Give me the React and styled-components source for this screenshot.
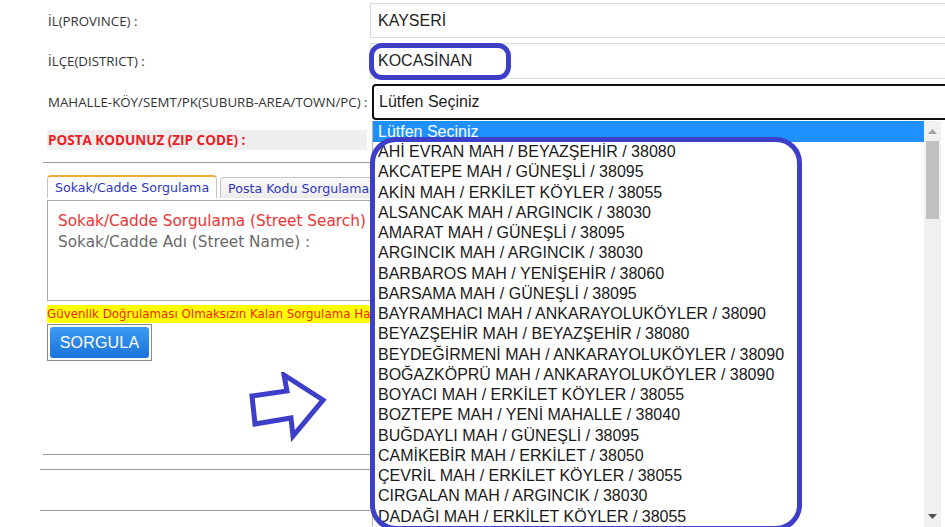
import React from "react";
import styled, { createGlobalStyle } from "styled-components";

const GlobalStyle = createGlobalStyle`
  html, body {
    margin: 0;
    padding: 0;
    background: #ffffff;
    overflow: hidden;
  }
  body {
    width: 945px;
    height: 527px;
    font-family: "Liberation Sans", Arial, sans-serif;
  }
`;

const Page = styled.div`
  position: relative;
  width: 945px;
  height: 527px;
  overflow: hidden;
`;

const Form = styled.div`
  display: flex;
  flex-direction: column;
  gap: 5px;
  padding-top: 3px;
`;

const Row = styled.div`
  display: grid;
  grid-template-columns: 370px 1fr;
  align-items: center;
  height: ${(p) => p.$height}px;
`;

const Label = styled.div`
  padding-left: 48px;
  font-family: "Open Sans", "Noto Sans", sans-serif;
  font-size: 13.3px;
  color: #333333;
  white-space: nowrap;
`;

const Field = styled.div`
  position: relative;
  height: 100%;
  margin-left: ${(p) => p.$offset || 0}px;
`;

const TextBox = styled.div`
  box-sizing: border-box;
  height: 100%;
  width: calc(100% + 20px);
  border: 1px solid #dcdcdc;
  box-shadow: inset 0 1px 1px rgba(0, 0, 0, 0.04);
  display: flex;
  align-items: center;
  padding-left: 7px;
  font-size: 16px;
  color: #1e1e1e;
  background: #fff;
`;

const SelectBox = styled(TextBox)`
  border: 2px solid #111111;
  border-radius: 4px;
  padding-left: 5px;
  box-shadow: none;
`;

const Highlight = styled.div`
  position: absolute;
  box-sizing: border-box;
  border: 5px solid #3d3fc9;
  border-radius: ${(p) => p.$radius}px;
  left: ${(p) => p.$left}px;
  top: ${(p) => p.$top}px;
  width: ${(p) => p.$width}px;
  height: ${(p) => p.$height}px;
  pointer-events: none;
  z-index: 5;
`;

const Dropdown = styled.div`
  position: absolute;
  left: 0;
  top: calc(100% + 1px);
  width: 568px;
  height: 406px;
  display: flex;
  background: #fff;
  border-left: 1px solid #b8b8b8;
  z-index: 3;
`;

const Options = styled.ul`
  list-style: none;
  margin: 0;
  padding: 0;
  flex: 1;
  overflow: hidden;
`;

const Option = styled.li`
  height: ${(p) => (p.$selected ? 21 : 20.25)}px;
  line-height: ${(p) => (p.$selected ? 21 : 20.25)}px;
  padding-left: 5px;
  font-size: 16px;
  white-space: nowrap;
  color: ${(p) => (p.$selected ? "#ffffff" : "#1a1a1a")};
  background: ${(p) => (p.$selected ? "#1e90ff" : "transparent")};
`;

const Scrollbar = styled.div`
  width: 17px;
  background: #f1f1f1;
  display: flex;
  flex-direction: column;
  align-items: center;
`;

const ScrollArrow = styled.div`
  height: 17px;
  width: 17px;
  display: flex;
  align-items: center;
  justify-content: center;
  margin-top: ${(p) => (p.$down ? "auto" : "2px")};
  margin-bottom: ${(p) => (p.$down ? "2px" : "0")};
`;

const Thumb = styled.div`
  width: 13px;
  height: 78px;
  background: #c1c1c1;
  margin-top: 1px;
`;

const Left = styled.div`
  width: 370px;
  display: flex;
  flex-direction: column;
`;

const ZipRow = styled.div`
  margin: 10px 3px 0 47px;
  height: 20px;
  background: #efefef;
  display: flex;
  align-items: center;
  padding-left: 1px;
  font-family: "Open Sans", "Noto Sans", sans-serif;
  font-weight: 700;
  font-size: 13.5px;
  color: #ee1c25;
`;

const Rule = styled.div`
  height: 1px;
  background: #9a9a9a;
  margin-left: ${(p) => p.$left}px;
  margin-top: ${(p) => p.$top}px;
`;

const Tabs = styled.div`
  display: flex;
  gap: 3px;
  margin: 12px 0 0 47px;
  height: 23px;
  align-items: flex-end;
  overflow: hidden;
`;

const Tab = styled.div`
  box-sizing: border-box;
  height: ${(p) => (p.$active ? 23 : 21)}px;
  padding: 0 7px;
  display: flex;
  align-items: center;
  font-family: "DejaVu Sans", Verdana, sans-serif;
  font-size: 12.6px;
  color: #3036c4;
  white-space: nowrap;
  border: 1px solid #c4c4c4;
  border-bottom: none;
  border-top: ${(p) => (p.$active ? "2px solid #f2a93b" : "1px solid #c4c4c4")};
  border-radius: 4px 4px 0 0;
  background: ${(p) => (p.$active ? "#ffffff" : "linear-gradient(#fafafa, #ececec)")};
`;

const Panel = styled.div`
  box-sizing: border-box;
  margin: 2px 0 0 47px;
  height: 101px;
  border: 1px solid #a8a8a8;
  border-right: none;
  padding: 10px 0 0 10px;
  font-family: "DejaVu Sans", Verdana, sans-serif;
  font-size: 15.3px;
  line-height: 21px;
  white-space: nowrap;
  overflow: hidden;
`;

const PanelTitle = styled.div`
  color: #ee3333;
`;

const PanelText = styled.div`
  color: #6a6a6a;
`;

const Warning = styled.div`
  margin: 4px 0 0 47px;
  height: 18px;
  line-height: 18px;
  background: #ffff00;
  color: #f01e0a;
  font-family: "DejaVu Sans", Verdana, sans-serif;
  font-size: 11.85px;
  white-space: nowrap;
  overflow: hidden;
`;

const ButtonFrame = styled.div`
  box-sizing: border-box;
  margin: 1px 0 0 47px;
  width: 105px;
  height: 37px;
  border: 1px solid #8a8a8a;
  padding: 2px;
`;

const Button = styled.button`
  width: 100%;
  height: 100%;
  border: none;
  border-radius: 3px;
  background: linear-gradient(#3d9bf5, #1b72da);
  color: #ffffff;
  font-family: "Liberation Sans", Arial, sans-serif;
  font-size: 16px;
  letter-spacing: 0.2px;
  padding: 0;
`;

const Arrow = styled.svg`
  display: block;
  margin: 11px 0 0 246px;
`;

const options = [
  "AHİ EVRAN MAH / BEYAZŞEHİR / 38080",
  "AKCATEPE MAH / GÜNEŞLİ / 38095",
  "AKİN MAH / ERKİLET KÖYLER / 38055",
  "ALSANCAK MAH / ARGINCIK / 38030",
  "AMARAT MAH / GÜNEŞLİ / 38095",
  "ARGINCIK MAH / ARGINCIK / 38030",
  "BARBAROS MAH / YENİŞEHİR / 38060",
  "BARSAMA MAH / GÜNEŞLİ / 38095",
  "BAYRAMHACI MAH / ANKARAYOLUKÖYLER / 38090",
  "BEYAZŞEHİR MAH / BEYAZŞEHİR / 38080",
  "BEYDEĞİRMENİ MAH / ANKARAYOLUKÖYLER / 38090",
  "BOĞAZKÖPRÜ MAH / ANKARAYOLUKÖYLER / 38090",
  "BOYACI MAH / ERKİLET KÖYLER / 38055",
  "BOZTEPE MAH / YENİ MAHALLE / 38040",
  "BUĞDAYLI MAH / GÜNEŞLİ / 38095",
  "CAMİKEBİR MAH / ERKİLET / 38050",
  "ÇEVRİL MAH / ERKİLET KÖYLER / 38055",
  "CIRGALAN MAH / ARGINCIK / 38030",
  "DADAĞI MAH / ERKİLET KÖYLER / 38055",
];

export default function App() {
  return (
    <>
      <GlobalStyle />
      <Page>
        <Form>
          <Row $height={35}>
            <Label>İL(PROVINCE) :</Label>
            <Field>
              <TextBox>KAYSERİ</TextBox>
            </Field>
          </Row>
          <Row $height={36}>
            <Label>İLÇE(DISTRICT) :</Label>
            <Field>
              <TextBox>KOCASİNAN</TextBox>
              <Highlight $left={-1} $top={0} $width={142} $height={37} $radius={13} />
            </Field>
          </Row>
          <Row $height={36}>
            <Label>MAHALLE-KÖY/SEMT/PK(SUBURB-AREA/TOWN/PC) :</Label>
            <Field $offset={2}>
              <SelectBox>Lütfen Seçiniz</SelectBox>
              <Dropdown>
                <Options>
                  <Option $selected>Lütfen Seçiniz</Option>
                  {options.map((o) => (
                    <Option key={o}>{o}</Option>
                  ))}
                </Options>
                <Scrollbar>
                  <ScrollArrow>
                    <svg width="9" height="5" viewBox="0 0 9 5">
                      <path d="M0 5 L4.5 0 L9 5 Z" fill="#a3a3a3" />
                    </svg>
                  </ScrollArrow>
                  <Thumb />
                  <ScrollArrow $down>
                    <svg width="9" height="5" viewBox="0 0 9 5">
                      <path d="M0 0 L4.5 5 L9 0 Z" fill="#505050" />
                    </svg>
                  </ScrollArrow>
                </Scrollbar>
                <Highlight $left={-3} $top={16} $width={432} $height={394} $radius={26} />
              </Dropdown>
            </Field>
          </Row>
        </Form>

        <Left>
          <ZipRow>POSTA KODUNUZ (ZIP CODE) :</ZipRow>
          <Rule $left={43} $top={12} />
          <Tabs>
            <Tab $active>Sokak/Cadde Sorgulama</Tab>
            <Tab>Posta Kodu Sorgulama</Tab>
          </Tabs>
          <Panel>
            <PanelTitle>Sokak/Cadde Sorgulama (Street Search)</PanelTitle>
            <PanelText>Sokak/Cadde Adı (Street Name) :</PanelText>
          </Panel>
          <Warning>Güvenlik Doğrulaması Olmaksızın Kalan Sorgulama Hakkınız</Warning>
          <ButtonFrame>
            <Button>SORGULA</Button>
          </ButtonFrame>
          <Arrow width="82" height="70" viewBox="0 0 82 70">
            <polygon
              points="6,24 41,19 38,3 77,28 47,64 45,46 9,52"
              fill="none"
              stroke="#3d3fc9"
              strokeWidth="5"
              strokeLinejoin="miter"
            />
          </Arrow>
          <Rule $left={43} $top={12} />
          <Rule $left={40} $top={14} />
          <Rule $left={40} $top={40} />
        </Left>
      </Page>
    </>
  );
}
